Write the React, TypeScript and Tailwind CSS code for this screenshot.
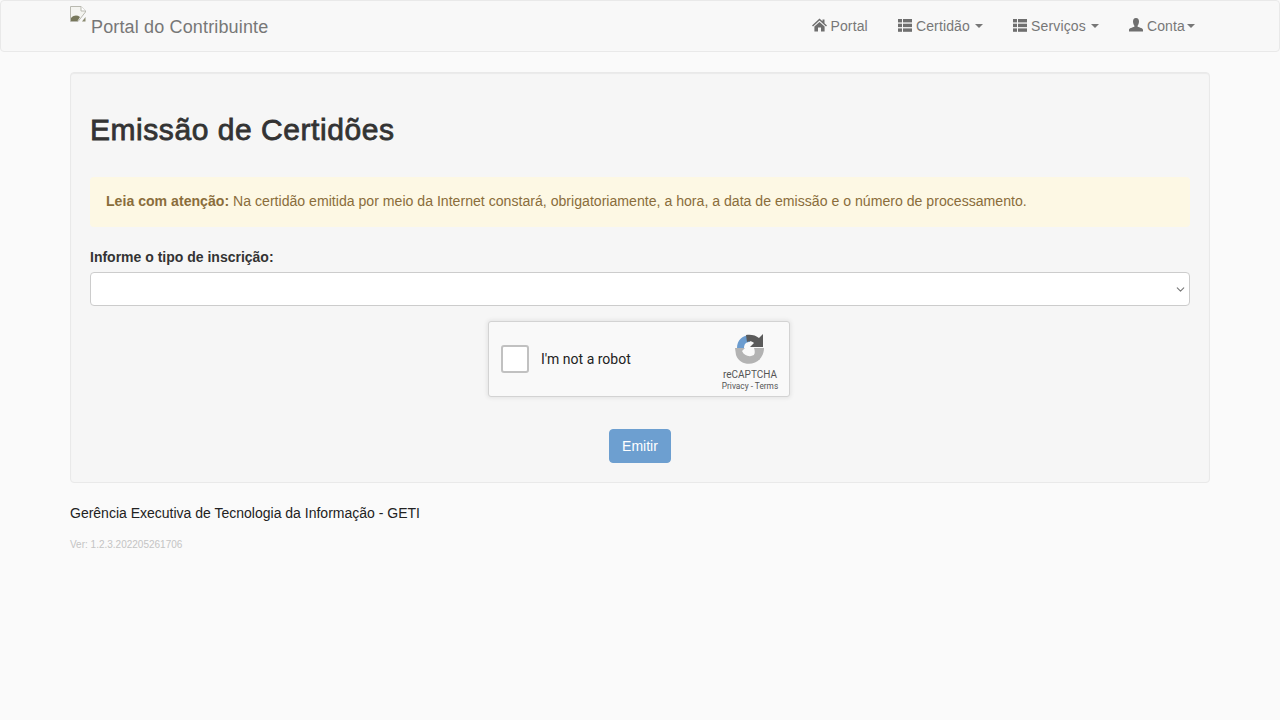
import { ChevronDown } from "lucide-react";

const HomeIcon = () => (
  <svg width="15" height="14" viewBox="0 0 15 14" className="fill-[#6f6f6f]">
    <path d="M7.5 0.5 L10.5 3.3 V1.5 H12.5 V5.2 L15 7.6 L14 8.5 L7.5 2.6 L1 8.5 L0 7.6 Z" />
    <path d="M7.5 4 L12.6 8.6 V13.5 H9 V9.5 H6 V13.5 H2.4 V8.6 Z" />
  </svg>
);

const ListIcon = () => (
  <svg width="14" height="13" viewBox="0 0 14 13" className="fill-[#6f6f6f]">
    <rect x="0" y="0" width="4" height="3.4" />
    <rect x="5" y="0" width="9" height="3.4" />
    <rect x="0" y="4.7" width="4" height="3.4" />
    <rect x="5" y="4.7" width="9" height="3.4" />
    <rect x="0" y="9.4" width="4" height="3.4" />
    <rect x="5" y="9.4" width="9" height="3.4" />
  </svg>
);

const UserIcon = () => (
  <svg width="14" height="14" viewBox="0 0 14 14" className="fill-[#6f6f6f]">
    <path d="M7 0 C9.2 0 10 1.7 10 3.6 C10 5.4 9.2 7 8.6 7.8 V8.8 C10.6 9.6 14 10.2 14 12 V13.6 H0 V12 C0 10.2 3.4 9.6 5.4 8.8 V7.8 C4.8 7 4 5.4 4 3.6 C4 1.7 4.8 0 7 0 Z" />
  </svg>
);

const Caret = () => <span className="inline-block w-0 h-0 border-x-4 border-x-transparent border-t-4 border-t-[#777]" />;

const BrokenImage = () => (
  <svg width="16" height="16" viewBox="0 0 16 16" className="self-start shrink-0">
    <path d="M0.5 0.5 H11 L15.5 5 V6 L8 15.5 H0.5 Z" fill="#f4f4f0" stroke="#b9b9b0" />
    <path d="M11 0.5 V5 H15.5" fill="#fff" stroke="#b9b9b0" />
    <path d="M1 15 L1 12 C4 9 7 9 10 11 L7.5 15 Z" fill="#77775a" />
    <path d="M12 15.5 L15.5 11 V15.5 Z" fill="#8a8a70" />
  </svg>
);

const RecaptchaLogo = () => (
  <svg width="32" height="32" viewBox="0 0 32 32">
    <path d="M3 14 C3 6 9 1 16 1 L16 8 C12 8 10 10 10 14 Z" fill="#6b9ccf" />
    <path d="M12 1 C16 0 22 1 25 4 L29 0 V13 H16 L20 9 C18 7 15 7 13 8 Z" fill="#5b5b5b" />
    <path d="M1 14 H11 L8 17 C10 22 17 24 21 20 L26 25 C20 32 6 32 2 21 Z" fill="#b3b3b3" />
    <path d="M20 14 H30 C30 19 28 23 25 26 L20 21 C21 19 21 17 20 14 Z" fill="#b3b3b3" />
  </svg>
);

const NavItem = ({ icon, label, caret, tight }: { icon: React.ReactNode; label: string; caret?: boolean; tight?: boolean }) => (
  <a className="flex items-center px-[15px] h-[50px] text-[14px] tracking-[0.15px] text-[#777]">
    <span className="w-[18px] -mt-0.5 flex">{icon}</span>
    {label}
    {caret && <span className={tight ? "flex ml-[2px]" : "flex ml-[5px]"}><Caret /></span>}
  </a>
);

export default function App() {
  return (
    <div className="min-h-[720px] bg-[#fafafa] font-['Liberation_Sans',Arial,sans-serif] text-[14px] text-[#333]">
      <nav className="h-[52px] bg-[#f8f8f8] border border-[#e9e9e9] rounded">
        <div className="w-[1170px] mx-auto px-[15px] flex justify-between h-[50px]">
          <a className="flex pt-[5px] text-[18px] tracking-[0.15px] text-[#777]">
            <BrokenImage />
            <span className="ml-[5px] mt-[7px] leading-[28px]">Portal do Contribuinte</span>
          </a>
          <div className="flex">
            <NavItem icon={<HomeIcon />} label="Portal" />
            <NavItem icon={<ListIcon />} label="Certidão" caret />
            <NavItem icon={<ListIcon />} label="Serviços" caret />
            <NavItem icon={<UserIcon />} label="Conta" caret tight />
          </div>
        </div>
      </nav>

      <main className="w-[1170px] mx-auto px-[15px] mt-[20px]">
        <section className="h-[411px] bg-[#f6f6f6] border border-[#e9e9e9] rounded shadow-[inset_0_1px_1px_rgba(0,0,0,0.05)] px-[19px]">
          <h1 className="mt-[40px] text-[30px] leading-[33px] font-normal [-webkit-text-stroke:0.8px_#333] tracking-[0.55px] text-[#333]">Emissão de Certidões</h1>
          <div className="mt-[31px] h-[50px] flex items-center px-[16px] bg-[#fdf8e4] rounded text-[#8a6d3b] text-[14.12px]">
            <p><b>Leia com atenção:</b> Na certidão emitida por meio da Internet constará, obrigatoriamente, a hora, a data de emissão e o número de processamento.</p>
          </div>
          <label className="block mt-[20px] font-bold leading-5">Informe o tipo de inscrição:</label>
          <div className="mt-[5px] h-[34px] bg-white border border-[#ccc] rounded flex items-center justify-end pr-[2px]">
            <ChevronDown size={13} className="text-[#777]" />
          </div>
          <div className="flex justify-center mt-[15px]">
            <div className="w-[302px] h-[76px] -ml-[2px] bg-[#f9f9f9] border border-[#d3d3d3] rounded-[3px] shadow-[0_0_4px_1px_rgba(0,0,0,0.08)] flex items-center pl-[12px] pr-[11px] font-['Roboto',sans-serif]">
              <span className="w-[28px] h-[28px] bg-white border-2 border-[#c1c1c1] rounded-[3px]" />
              <span className="ml-[12px] text-[14px] text-[#222] flex-1">I'm not a robot</span>
              <div className="flex flex-col items-center w-[56px] pt-[6px]">
                <RecaptchaLogo />
                <span className="text-[10px] leading-[12px] mt-[3px] text-[#555]">reCAPTCHA</span>
                <span className="text-[8.3px] leading-[10px] text-[#555] whitespace-nowrap">Privacy - Terms</span>
              </div>
            </div>
          </div>
          <div className="flex justify-center mt-[32px]">
            <button className="w-[62px] h-[34px] bg-[#6d9fd0] border border-[#6d9fd0] rounded text-white">Emitir</button>
          </div>
        </section>
        <p className="mt-[20px] text-[#222] leading-5">Gerência Executiva de Tecnologia da Informação - GETI</p>
        <p className="mt-[16px] text-[10px] leading-[12px] text-[#c4c4c4]">Ver: 1.2.3.202205261706</p>
      </main>
    </div>
  );
}
